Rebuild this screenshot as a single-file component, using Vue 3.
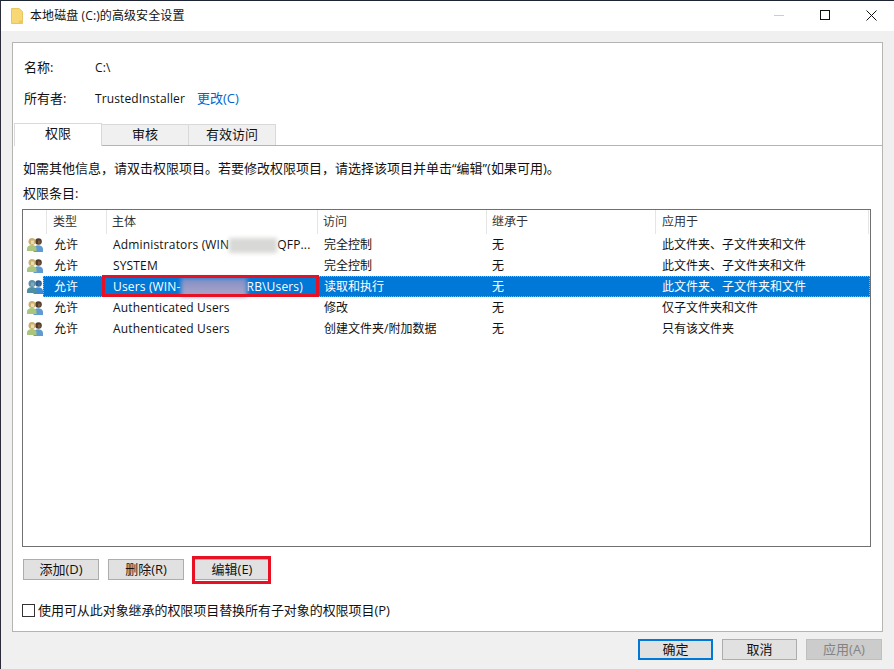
<script setup>
const hint = '如需其他信息\uFF0C请双击权限项目。若要修改权限项目\uFF0C请选择该项目并单击“编辑”(如果可用)。'
const columns = [
  { label: '类型', width: 60 },
  { label: '主体', width: 211 },
  { label: '访问', width: 169 },
  { label: '继承于', width: 169 },
  { label: '应用于', width: 213 },
]
const rows = [
  { type: '允许', who: 'Administrators (WIN', gap: 'light', tail: 'QFP...', access: '完全控制', from: '无', to: '此文件夹、子文件夹和文件' },
  { type: '允许', who: 'SYSTEM', access: '完全控制', from: '无', to: '此文件夹、子文件夹和文件' },
  { type: '允许', who: 'Users (WIN-', gap: 'blue', tail: 'RB\\Users)', access: '读取和执行', from: '无', to: '此文件夹、子文件夹和文件', selected: true },
  { type: '允许', who: 'Authenticated Users', access: '修改', from: '无', to: '仅子文件夹和文件' },
  { type: '允许', who: 'Authenticated Users', access: '创建文件夹/附加数据', from: '无', to: '只有该文件夹' },
]
</script>

<template>
  <div class="window">
    <header class="titlebar">
      <svg class="folder" width="12" height="16" viewBox="0 0 12 16">
        <path d="M.5.5h7.500l3.500 3v12H.5z" fill="#f8d775" stroke="#e8c660" />
        <path d="M8 12.500h3.500v3H8z" fill="#efc95f" />
      </svg>
      <span class="title">本地磁盘 (C:)的高级安全设置</span>
      <div class="controls">
        <span class="ctl"><i class="min"></i></span>
        <span class="ctl"><i class="max"></i></span>
        <span class="ctl">
          <svg width="11" height="11" viewBox="0 0 11 11"><path d="M.5.5l10 10M10.500.5l-10 10" stroke="#111" fill="none" /></svg>
        </span>
      </div>
    </header>

    <main class="panel">
      <div class="info">
        <div class="info-row"><span class="k">名称:</span><span class="latin">C:\</span></div>
        <div class="info-row"><span class="k">所有者:</span><span class="latin">TrustedInstaller</span><a class="link">更改(C)</a></div>
      </div>

      <div class="tabs">
        <span class="tab active">权限</span>
        <span class="tab">审核</span>
        <span class="tab">有效访问</span>
      </div>

      <p class="hint">{{ hint }}</p>
      <p class="caption">权限条目:</p>

      <div class="list">
        <div class="head">
          <span class="icon-col"></span>
          <span v-for="c in columns" :key="c.label" class="hcell" :style="{ width: c.width + 'px' }">{{ c.label }}</span>
        </div>
        <div v-for="(r, i) in rows" :key="i" class="row">
          <svg class="user-icon" :class="{ tint: r.selected }" width="16" height="16" viewBox="0 0 16 16">
            <circle class="head-r" cx="11.500" cy="4.500" r="3.300" />
            <path class="face-r" d="M11 3.500h2.500v3.200h-2.500z" />
            <path class="body-r" d="M6.500 15v-3c0-2.500 2.200-3.800 4.700-3.800s4.800 1.300 4.800 3.800v3z" />
            <circle class="head-l" cx="5" cy="4.500" r="3.500" />
            <path class="face-l" d="M4 3.500h3v3.500h-3z" />
            <path class="body-l" d="M0 14v-2.500C0 9.300 2.300 8 5 8s4.500 1.300 4.500 3.500V14z" />
          </svg>
          <div class="cells" :class="{ selected: r.selected }">
            <span class="cell" style="width: 60px">{{ r.type }}</span>
            <span class="cell who" style="width: 211px">{{ r.who }}<i v-if="r.gap" class="smear" :class="'smear-' + r.gap"></i>{{ r.tail }}<i v-if="r.selected" class="mark mark-row"></i></span>
            <span class="cell" style="width: 168px">{{ r.access }}</span>
            <span class="cell" style="width: 170px">{{ r.from }}</span>
            <span class="cell" style="width: 208px">{{ r.to }}</span>
          </div>
        </div>
      </div>

      <div class="actions">
        <button class="btn">添加(D)</button>
        <button class="btn">删除(R)</button>
        <button class="btn marked">编辑(E)<i class="mark mark-btn"></i></button>
      </div>

      <label class="replace"><i class="box"></i>使用可从此对象继承的权限项目替换所有子对象的权限项目(P)</label>
    </main>

    <footer class="footer">
      <button class="btn primary">确定</button>
      <button class="btn">取消</button>
      <button class="btn disabled">应用(A)</button>
    </footer>
  </div>
</template>

<style>
html, body { margin: 0; background: #f0f0f0; }
</style>

<style scoped>
.window {
  width: 894px;
  height: 669px;
  box-sizing: border-box;
  overflow: hidden;
  background: #f0f0f0;
  border-left: 1px solid #2b2b3b;
  border-top: 1px solid #1d2433;
  font: 13px/16px "Open Sans", "Noto Sans CJK SC", sans-serif;
  color: #111;
  display: flex;
  flex-direction: column;
}
.titlebar {
  height: 30px;
  flex: none;
  background: #fff;
  display: flex;
  align-items: center;
  padding-left: 10px;
  font-size: 12px;
  letter-spacing: .1px;
}
.folder { margin-right: 7px; margin-top: -1px; }
.controls { margin-left: auto; display: flex; align-self: flex-start; }
.ctl { width: 46px; height: 28px; display: flex; align-items: center; justify-content: center; }
.ctl .min { width: 10px; height: 1px; background: #ccc; }
.ctl .max { width: 8px; height: 8px; border: 1px solid #111; }
.panel {
  margin: 11px 11px 0 11px;
  height: 590px;
  flex: none;
  box-sizing: border-box;
  background: #fff;
  border: 1px solid #b4b4b4;
}
.info { padding: 16px 0 0 11px; height: 80px; box-sizing: border-box; }
.info-row { display: flex; height: 31px; align-items: baseline; }
.k { width: 71px; }
.latin { font-size: 12px; letter-spacing: .12px; }
.link { color: #0066cc; margin-left: 12px; }
.tabs { display: flex; height: 22px; margin-left: 1px; border-bottom: 1px solid #b4b4b4; }
.tab {
  width: 86px;
  height: 20px;
  margin-top: 1px;
  text-align: center;
  line-height: 18px;
  background: #f0f0f0;
  border: 1px solid #d9d9d9;
  border-bottom: 0;
  margin-right: -1px;
}
.tab.active { background: #fff; height: 22px; margin-top: 0; margin-bottom: -1px; z-index: 1; }
.hint { margin: 14px 0 0 10px; height: 16px; }
.caption { margin: 9px 0 0 10px; height: 16px; }
.list {
  margin: 8px 0 0 9px;
  width: 849px;
  height: 338px;
  box-sizing: border-box;
  border: 1px solid #707070;
  background: #fff;
  font-size: 12px;
}
.head { display: flex; height: 24px; color: #333; }
.icon-col { width: 24px; border-right: 1px solid #e5e5e5; flex: none; box-sizing: border-box; }
.hcell {
  box-sizing: border-box;
  padding-left: 5px;
  line-height: 23px;
  border-right: 1px solid #e5e5e5;
  flex: none;
}
.hcell:nth-child(2), .hcell:last-child { padding-left: 6px; }
.row { display: flex; height: 21px; align-items: center; }
.user-icon { width: 16px; height: 16px; margin-left: 4px; flex: none; }
.head-r { fill: #4f3b2b; }
.face-r { fill: #7a5a42; }
.body-r { fill: #5f9bd0; }
.head-l { fill: #c9b06c; }
.face-l { fill: #ecd9b4; }
.body-l { fill: #a9c67c; }
.tint .head-r { fill: #2f5f8f; }
.tint .face-r { fill: #3e739f; }
.tint .body-r { fill: #3d8ad4; }
.tint .head-l { fill: #5c8fa8; }
.tint .face-l { fill: #7fa9bb; }
.tint .body-l { fill: #4f8f9f; }
.cells { display: flex; height: 21px; line-height: 21px; flex: 1; box-sizing: border-box; }
.cells.selected { background: #0078d7; color: #fff; outline: 1px dotted #ff9a1f; outline-offset: -1px; }
.cell { box-sizing: border-box; padding-left: 10px; flex: none; white-space: nowrap; position: relative; height: 21px; }
.cell:first-child { padding-left: 11px; }
.who { letter-spacing: .16px; }
.smear { display: inline-block; vertical-align: middle; height: 15px; filter: blur(2px); }
.smear-light { width: 48px; background: #d8d8d6; }
.smear-blue { width: 66px; height: 19px; background: linear-gradient(#7e8fc4, #b3a6c9); }
.mark { position: absolute; border: 3px solid #e81123; pointer-events: none; box-sizing: border-box; }
.mark-row { left: -1px; top: -1px; width: 217px; height: 22px; }
.actions { display: flex; gap: 9px; margin: 12px 0 0 10px; letter-spacing: -.3px; }
.btn {
  width: 76px;
  height: 21px;
  box-sizing: border-box;
  padding: 0;
  font: inherit;
  line-height: 17px;
  color: #111;
  background: #e1e1e1;
  border: 1px solid #adadad;
  position: relative;
}
.marked { margin-left: 1px; }
.mark-btn { left: -3px; top: -4px; width: 79px; height: 28px; }
.replace { display: flex; align-items: center; margin: 22px 0 0 9px; height: 16px; letter-spacing: -.06px; }
.box { width: 11px; height: 11px; border: 1px solid #333; margin-right: 3px; background: #fff; }
.footer { display: flex; justify-content: flex-end; gap: 9px; padding: 7px 12px 0 0; }
.footer .btn { width: 75px; }
.footer .btn:last-child { width: 76px; }
.primary { border: 2px solid #0078d7; }
.disabled { background: #ccc; border-color: #bfbfbf; color: #838383; }
</style>
